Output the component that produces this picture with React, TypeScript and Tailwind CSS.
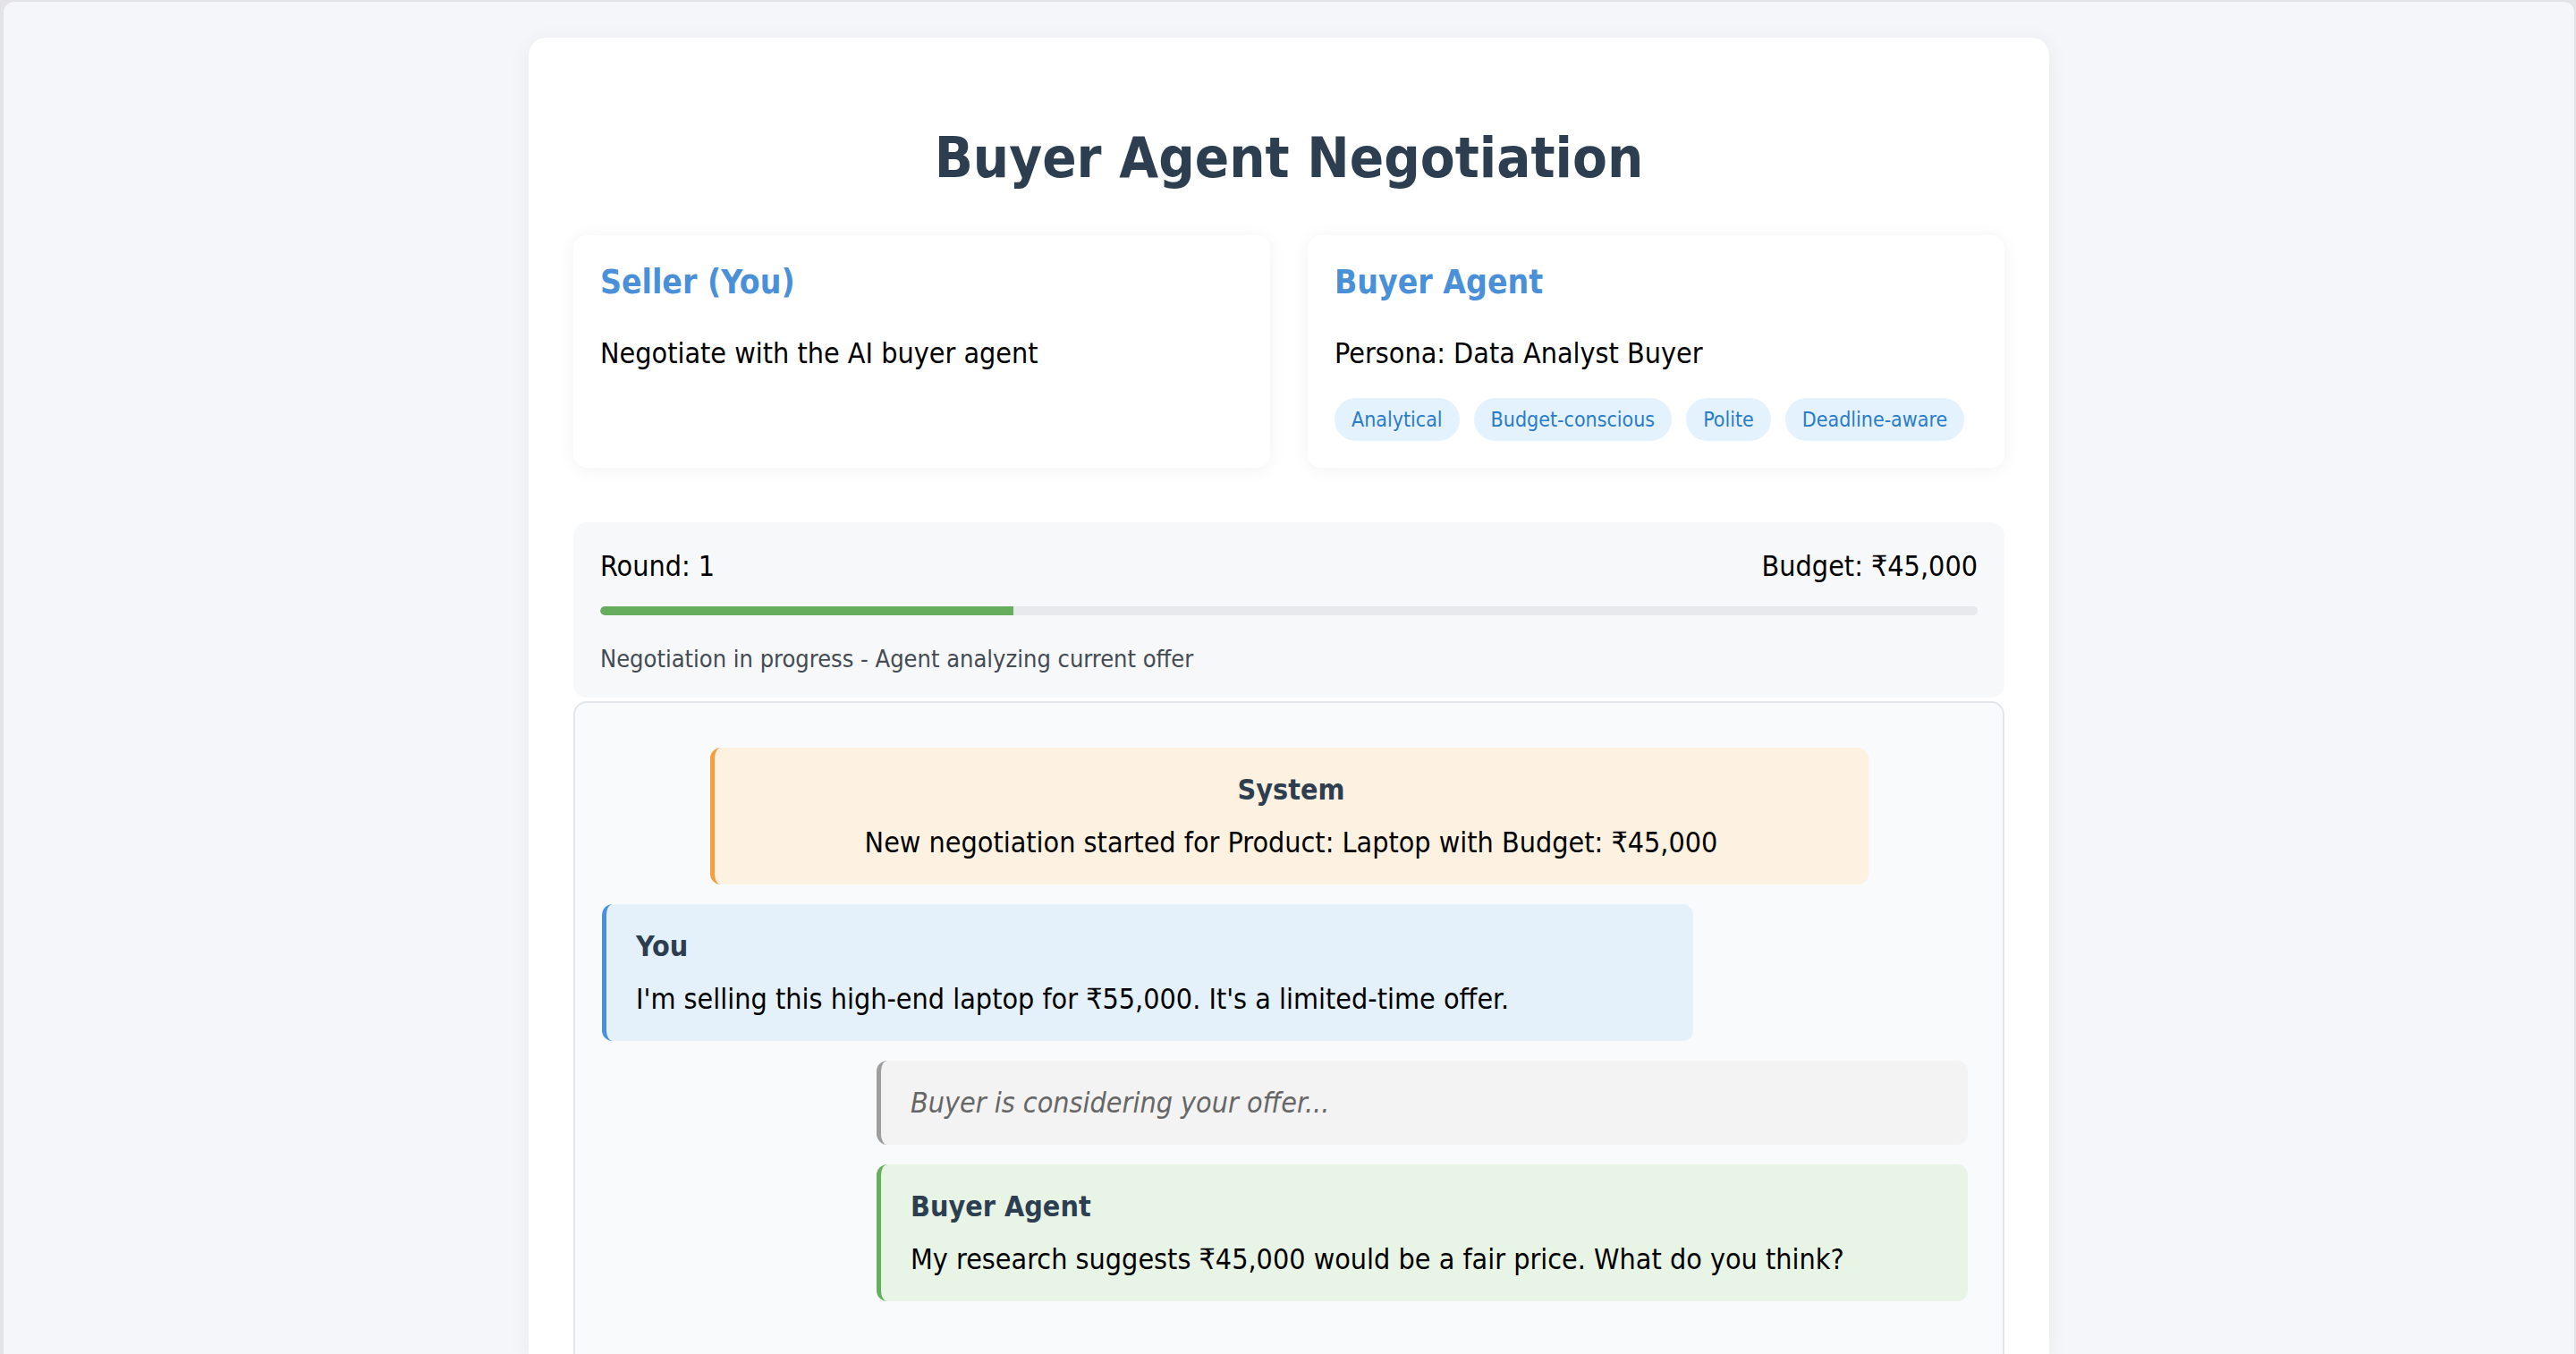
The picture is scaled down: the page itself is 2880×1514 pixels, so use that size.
import React from "react";

type Message = {
  kind: "system" | "seller" | "thinking" | "buyer";
  sender?: string;
  text: string;
};

const traits = ["Analytical", "Budget-conscious", "Polite", "Deadline-aware"];

const messages: Message[] = [
  { kind: "system", sender: "System", text: "New negotiation started for Product: Laptop with Budget: ₹45,000" },
  { kind: "seller", sender: "You", text: "I'm selling this high-end laptop for ₹55,000. It's a limited-time offer." },
  { kind: "thinking", text: "Buyer is considering your offer..." },
  { kind: "buyer", sender: "Buyer Agent", text: "My research suggests ₹45,000 would be a fair price. What do you think?" },
];

function ChatBubble({ msg }: { msg: Message }) {
  if (msg.kind === "system") {
    return (
      <div className="w-[1295px] self-center rounded-[12px] border-l-[5px] border-[#f3a03c] bg-[#fdf2e1] px-[33px] py-[28px] text-center">
        <div className="text-[32px] font-bold leading-[38px] text-[#2c3e50]">{msg.sender}</div>
        <div className="mt-[21px] text-[32px] leading-[38px] text-black">{msg.text}</div>
      </div>
    );
  }
  if (msg.kind === "thinking") {
    return (
      <div className="mr-[9px] w-[1220px] self-end rounded-[12px] border-l-[5px] border-[#9e9e9e] bg-[#f3f3f3] px-[33px] py-[28px]">
        <div className="text-[32px] italic leading-[38px] text-[#666666]">{msg.text}</div>
      </div>
    );
  }
  const seller = msg.kind === "seller";
  return (
    <div
      className={
        seller
          ? "w-[1220px] self-start rounded-[12px] border-l-[5px] border-[#4a90e2] bg-[#e4f1fb] px-[33px] py-[28px]"
          : "mr-[9px] w-[1220px] self-end rounded-[12px] border-l-[5px] border-[#66b05c] bg-[#e8f4e6] px-[33px] py-[28px]"
      }
    >
      <div className="text-[32px] font-bold leading-[38px] text-[#2c3e50]">{msg.sender}</div>
      <div className="mt-[21px] text-[32px] leading-[38px] text-black">{msg.text}</div>
    </div>
  );
}

export default function App() {
  const progress = 30;

  return (
    <div className="min-h-screen w-full bg-[#e4e4e6] pl-[4px] pr-[2px] pt-[2px] font-['DejaVu_Sans_Condensed','DejaVu_Sans',sans-serif]">
      <div className="min-h-[1512px] rounded-t-[12px] bg-[#f5f6fa] pt-[40px]">
        <div className="mx-auto w-[1700px] rounded-t-[20px] bg-white px-[50px] pt-[96px] shadow-[0_4px_24px_rgba(0,0,0,0.06)]">
          <h1 className="text-center text-[63px] font-bold leading-[77px] text-[#2c3e50]">
            Buyer Agent Negotiation
          </h1>

          <div className="mt-[48px] grid grid-cols-2 gap-[42px]">
            <div className="rounded-[15px] bg-white p-[30px] shadow-[0_2px_20px_rgba(0,0,0,0.06)]">
              <h3 className="text-[37px] font-bold leading-[45px] text-[#4a90d9]">Seller (You)</h3>
              <p className="mt-[38px] text-[32px] leading-[39px] text-black">Negotiate with the AI buyer agent</p>
            </div>
            <div className="rounded-[15px] bg-white p-[30px] shadow-[0_2px_20px_rgba(0,0,0,0.06)]">
              <h3 className="text-[37px] font-bold leading-[45px] text-[#4a90d9]">Buyer Agent</h3>
              <p className="mt-[38px] text-[32px] leading-[39px] text-black">Persona: Data Analyst Buyer</p>
              <div className="mt-[30px] flex flex-nowrap gap-[16px]">
                {traits.map((t) => (
                  <span
                    key={t}
                    className="whitespace-nowrap rounded-full bg-[#e3f2fd] px-[19px] py-[10px] text-[23px] leading-[28px] text-[#2a7cc9]"
                  >
                    {t}
                  </span>
                ))}
              </div>
            </div>
          </div>

          <div className="mt-[61px] rounded-[15px] bg-[#f7f8fa] px-[30px] pb-[26px] pt-[30px]">
            <div className="flex items-center justify-between text-[32px] leading-[39px] text-black">
              <span>Round: 1</span>
              <span>Budget: ₹45,000</span>
            </div>
            <div className="mt-[25px] h-[10px] w-full overflow-hidden rounded-full bg-[#e8e9ec]">
              <div className="h-full rounded-l-full bg-[#66ad5e]" style={{ width: `${progress}%` }} />
            </div>
            <p className="mt-[32px] text-[27px] leading-[34px] text-[#444b52]">
              Negotiation in progress - Agent analyzing current offer
            </p>
          </div>

          <div className="mt-[4px] flex flex-col gap-[22px] rounded-t-[15px] border-2 border-b-0 border-[#e3e6ea] bg-[#f9fafc] px-[30px] pb-[60px] pt-[50px]">
            {messages.map((m, i) => (
              <ChatBubble key={i} msg={m} />
            ))}
          </div>
        </div>
      </div>
    </div>
  );
}
